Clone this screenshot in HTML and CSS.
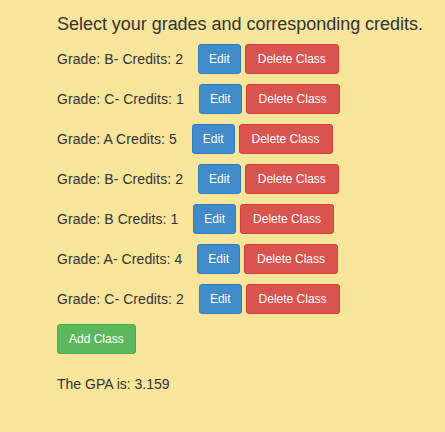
FILE: index.html
```html
<!DOCTYPE html>
<html>
<head>
<meta charset="utf-8">
<link rel="stylesheet" href="styles.css">
</head>
<body>
<div class="page">
  <h4 class="title">Select your grades and corresponding credits.</h4>
  <div class="list">
    <div class="row"><span class="label">Grade: B- Credits: 2</span><button class="btn btn-edit">Edit</button><button class="btn btn-del">Delete Class</button></div>
    <div class="row"><span class="label">Grade: C- Credits: 1</span><button class="btn btn-edit">Edit</button><button class="btn btn-del">Delete Class</button></div>
    <div class="row"><span class="label">Grade: A Credits: 5</span><button class="btn btn-edit">Edit</button><button class="btn btn-del">Delete Class</button></div>
    <div class="row"><span class="label">Grade: B- Credits: 2</span><button class="btn btn-edit">Edit</button><button class="btn btn-del">Delete Class</button></div>
    <div class="row"><span class="label">Grade: B Credits: 1</span><button class="btn btn-edit">Edit</button><button class="btn btn-del">Delete Class</button></div>
    <div class="row"><span class="label">Grade: A- Credits: 4</span><button class="btn btn-edit">Edit</button><button class="btn btn-del">Delete Class</button></div>
    <div class="row"><span class="label">Grade: C- Credits: 2</span><button class="btn btn-edit">Edit</button><button class="btn btn-del">Delete Class</button></div>
    <div class="row"><button class="btn btn-add">Add Class</button></div>
  </div>
  <p class="gpa">The GPA is: 3.159</p>
</div>
</body>
</html>
```
FILE: styles.css
```css
html, body {
  margin: 0;
  padding: 0;
  background: #f6e59b;
}
body {
  font-family: "Liberation Sans", Arial, sans-serif;
  font-size: 14px;
  color: #333;
}
.page {
  padding: 14px 0 0 57px;
  height: 432px;
  box-sizing: border-box;
}
.title {
  margin: 0 0 10px 0;
  font-size: 18px;
  font-weight: 500;
  line-height: 20px;
  color: #333;
  letter-spacing: -0.03px;
}
.list {
  display: flex;
  flex-direction: column;
  gap: 10px;
}
.row {
  display: flex;
  align-items: center;
  height: 30px;
}
.label {
  margin-right: 15px;
  line-height: 20px;
  letter-spacing: 0.08px;
}
.btn {
  font-family: "Liberation Sans", Arial, sans-serif;
  font-size: 12px;
  line-height: 18px;
  padding: 5px 10px;
  border: 1px solid transparent;
  border-radius: 3px;
  color: #fff;
  cursor: pointer;
  height: 30px;
  box-sizing: border-box;
}
.btn-edit {
  background: #428bca;
  border-color: #357ebd;
  margin-right: 4px;
}
.btn-del {
  background: #d9534f;
  border-color: #d43f3a;
  padding: 5px 12px;
}
.btn-add {
  background: #5cb85c;
  border-color: #4cae4c;
  padding: 5px 11px;
}
.gpa {
  margin: 20px 0 0 0;
  line-height: 20px;
}
```
